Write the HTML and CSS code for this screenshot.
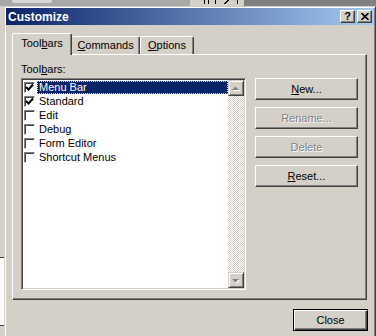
FILE: index.html
```html
<!DOCTYPE html>
<html lang="en">
<head>
    <meta charset="UTF-8">
    <meta name="viewport" content="width=device-width, initial-scale=1.0">
    <title>Customize</title>

    <link rel="stylesheet" href="styles.css">
</head>
<body>

    <div class="screen">
        <div class="desk-top">
            <span class="desk-blob"></span>
            <span class="desk-mark"></span>
            <span class="desk-mark"></span>
            <span class="desk-mark desk-mark-gap"></span>
            <span class="desk-mark desk-mark-x"></span>
            <span class="desk-mark"></span>
        </div>
        <div class="desk-left">
            <div class="desk-window"></div>
        </div>

        <div class="dialog">
            <div class="titlebar">
                <span class="title">Customize</span>
                <div class="caption-btns">
                    <span class="cap-btn cap-help">?</span>
                    <span class="cap-btn">
                        <svg width="8" height="7" viewBox="0 0 8 7">
                            <path d="M0.5 0 L7.5 7 M7.5 0 L0.5 7" stroke="#000" stroke-width="1.6"/>
                        </svg>
                    </span>
                </div>
            </div>

            <div class="dlg-body">
                <div class="tabs">
                    <div class="tab tab-active">Tool<u>b</u>ars</div>
                    <div class="tab tab-commands"><u>C</u>ommands</div>
                    <div class="tab tab-options"><u>O</u>ptions</div>
                </div>

                <div class="panel">
                    <div class="list-label">Tool<u>b</u>ars:</div>

                    <div class="listbox">
                        <ul class="items">
                            <li class="item">
                                <span class="check"><svg width="9" height="9" viewBox="0 0 9 9"><path d="M1 4 L3.5 6.5 L8 1.5" fill="none" stroke="#000" stroke-width="2"/></svg></span>
                                <span class="item-text item-selected">Menu Bar</span>
                            </li>
                            <li class="item">
                                <span class="check"><svg width="9" height="9" viewBox="0 0 9 9"><path d="M1 4 L3.5 6.5 L8 1.5" fill="none" stroke="#000" stroke-width="2"/></svg></span>
                                <span class="item-text">Standard</span>
                            </li>
                            <li class="item">
                                <span class="check"></span>
                                <span class="item-text">Edit</span>
                            </li>
                            <li class="item">
                                <span class="check"></span>
                                <span class="item-text">Debug</span>
                            </li>
                            <li class="item">
                                <span class="check"></span>
                                <span class="item-text">Form Editor</span>
                            </li>
                            <li class="item">
                                <span class="check"></span>
                                <span class="item-text">Shortcut Menus</span>
                            </li>
                        </ul>
                        <div class="scrollbar">
                            <div class="sb-btn">
                                <svg width="12" height="12" viewBox="0 0 12 12">
                                    <polygon points="3,9 10,9 6.5,5.5" fill="#fff"/>
                                    <polygon points="2,8 9,8 5.5,4.5" fill="#808080"/>
                                </svg>
                            </div>
                            <div class="sb-track"></div>
                            <div class="sb-btn">
                                <svg width="12" height="12" viewBox="0 0 12 12">
                                    <polygon points="3,6 10,6 6.5,9.5" fill="#fff"/>
                                    <polygon points="2,5 9,5 5.5,8.5" fill="#808080"/>
                                </svg>
                            </div>
                        </div>
                    </div>

                    <div class="side-buttons">
                        <button class="btn"><u>N</u>ew...</button>
                        <button class="btn btn-disabled">Rename...</button>
                        <button class="btn btn-disabled">Delete</button>
                        <button class="btn"><u>R</u>eset...</button>
                    </div>
                </div>

                <div class="footer">
                    <button class="btn btn-default">Close</button>
                </div>
            </div>
        </div>
    </div>

</body>
</html>
```

FILE: styles.css
```css
* {
    padding: 0;
    margin: 0;
    box-sizing: border-box;
}

html {
    font-size: 11px;
    font-family: "Liberation Sans", Arial, sans-serif;
}

body {
    background-color: #d4d0c8;
}

.screen {
    width: 376px;
    height: 336px;

    position: relative;
    overflow: hidden;

    background-color: #d4d0c8;
}

/* windows behind the dialog */

.desk-top {
    width: 100%;
    height: 6px;

    position: absolute;
    top: 0;
    left: 0;
    overflow: hidden;

    display: flex;
    align-items: flex-start;
    padding-left: 204px;
    gap: 3px;

    background: linear-gradient(to right, #a8a8a8 0 190px, #d4d0c8 190px 244px, #808080 244px);
}

.desk-blob {
    width: 40px;
    height: 3px;

    position: absolute;
    left: 12px;
    top: 0;

    background-color: #d8d8d8;
    border-radius: 0 0 2px 2px;
}

.desk-mark {
    width: 1px;
    height: 4px;
    background-color: #000;
}

.desk-mark-gap {
    margin-left: 3px;
}

.desk-mark-x {
    width: 5px;
    margin: 0 5px;
    background: linear-gradient(to bottom right, transparent 40%, #000 40% 60%, transparent 60%);
}

.desk-left {
    width: 4px;
    height: 330px;

    position: absolute;
    top: 6px;
    left: 0;

    padding-top: 251px;
}

.desk-window {
    height: 69px;

    background-color: #fff;
    border-top: 1px solid #404040;
    border-bottom: 1px solid #404040;
}

/* dialog */

.dialog {
    width: 372px;
    height: 340px;

    position: absolute;
    top: 6px;
    left: 4px;

    padding: 1px;

    background-color: #d4d0c8;
    border: 1px solid;
    border-color: #d4d0c8 #404040 #404040 #d4d0c8;
    box-shadow: inset 1px 1px #fff, inset -1px -1px #808080;
}

.titlebar {
    height: 17px;

    display: flex;
    justify-content: space-between;
    align-items: center;

    padding: 0 2px;

    background: linear-gradient(to right, #0a246a, #a6caf0);
}

.title {
    color: #fff;
    font-size: 12px;
    font-weight: bold;
}

.caption-btns {
    display: flex;
    gap: 2px;
}

.cap-btn {
    width: 15px;
    height: 13px;

    display: flex;
    justify-content: center;
    align-items: center;

    background-color: #d4d0c8;
    border: 1px solid;
    border-color: #fff #404040 #404040 #fff;
    box-shadow: inset -1px -1px #808080;
}

.cap-help {
    font-size: 11px;
    font-weight: bold;
    line-height: 1;
}

.dlg-body {
    padding: 8px 6px 0;
}

/* tabs */

.tabs {
    height: 21px;

    display: flex;
    align-items: flex-end;
}

.tab {
    height: 18px;

    display: flex;
    justify-content: center;
    align-items: center;

    padding-bottom: 1px;

    border-top: 1px solid #fff;
    border-left: 1px solid #fff;
    border-right: 1px solid #404040;
    border-radius: 2px 2px 0 0;
    box-shadow: inset -1px 0 #808080;
}

.tab-active {
    width: 60px;
    height: 22px;

    position: relative;
    z-index: 1;
    margin-bottom: -1px;
    padding-bottom: 3px;

    background-color: #d4d0c8;
}

.tab-commands {
    width: 68px;
    border-left: none;
}

.tab-options {
    width: 54px;
}

/* panel */

.panel {
    width: 355px;

    display: grid;
    grid-template-columns: 225px 103px;
    grid-template-rows: 13px 212px;
    row-gap: 2px;
    column-gap: 9px;

    padding: 8px 8px 9px 8px;

    border: 1px solid;
    border-color: #fff #404040 #404040 #fff;
    box-shadow: inset -1px -1px #808080;
}

.list-label {
    grid-column: 1 / 3;
    line-height: 13px;
}

.listbox {
    display: flex;

    padding: 1px;

    background-color: #fff;
    border: 1px solid;
    border-color: #808080 #fff #fff #808080;
    box-shadow: inset 1px 1px #404040, inset -1px -1px #d4d0c8;
}

.items {
    flex: 1;
    list-style: none;
}

.item {
    height: 14px;

    display: flex;
    align-items: center;
}

.check {
    width: 11px;
    height: 11px;

    display: flex;
    justify-content: center;
    align-items: center;

    margin-left: 1px;
    margin-right: 2px;

    background-color: #fff;
    border: 1px solid;
    border-color: #808080 #fff #fff #808080;
    box-shadow: inset 1px 1px #404040;
}

.item-text {
    flex: 1;
    height: 13px;

    padding: 0 2px;
    line-height: 13px;
}

.item-selected {
    color: #fff;
    background-color: #0a246a;
    outline: 1px dotted #f5db95;
    outline-offset: -1px;
}

.scrollbar {
    width: 16px;

    display: flex;
    flex-direction: column;
}

.sb-btn {
    height: 16px;

    display: flex;
    justify-content: center;
    align-items: center;

    background-color: #d4d0c8;
    border: 1px solid;
    border-color: #d4d0c8 #404040 #404040 #d4d0c8;
    box-shadow: inset 1px 1px #fff, inset -1px -1px #808080;
}

.sb-track {
    flex: 1;
    background: repeating-conic-gradient(#fff 0 25%, #d4d0c8 0 50%) 0 0 / 2px 2px;
}

/* buttons */

.side-buttons {
    display: flex;
    flex-direction: column;
    gap: 7px;
}

.btn {
    height: 22px;

    font-family: inherit;
    font-size: 11px;
    color: #000;

    background-color: #d4d0c8;
    border: 1px solid;
    border-color: #fff #404040 #404040 #fff;
    box-shadow: inset -1px -1px #808080;
}

.btn-disabled {
    color: #808080;
    text-shadow: 1px 1px #fff;
}

.footer {
    display: flex;
    justify-content: flex-end;

    margin-top: 9px;
}

.btn-default {
    width: 75px;

    border-color: #000;
    box-shadow: inset 1px 1px #fff, inset -1px -1px #404040, inset -2px -2px #808080;
}
```
